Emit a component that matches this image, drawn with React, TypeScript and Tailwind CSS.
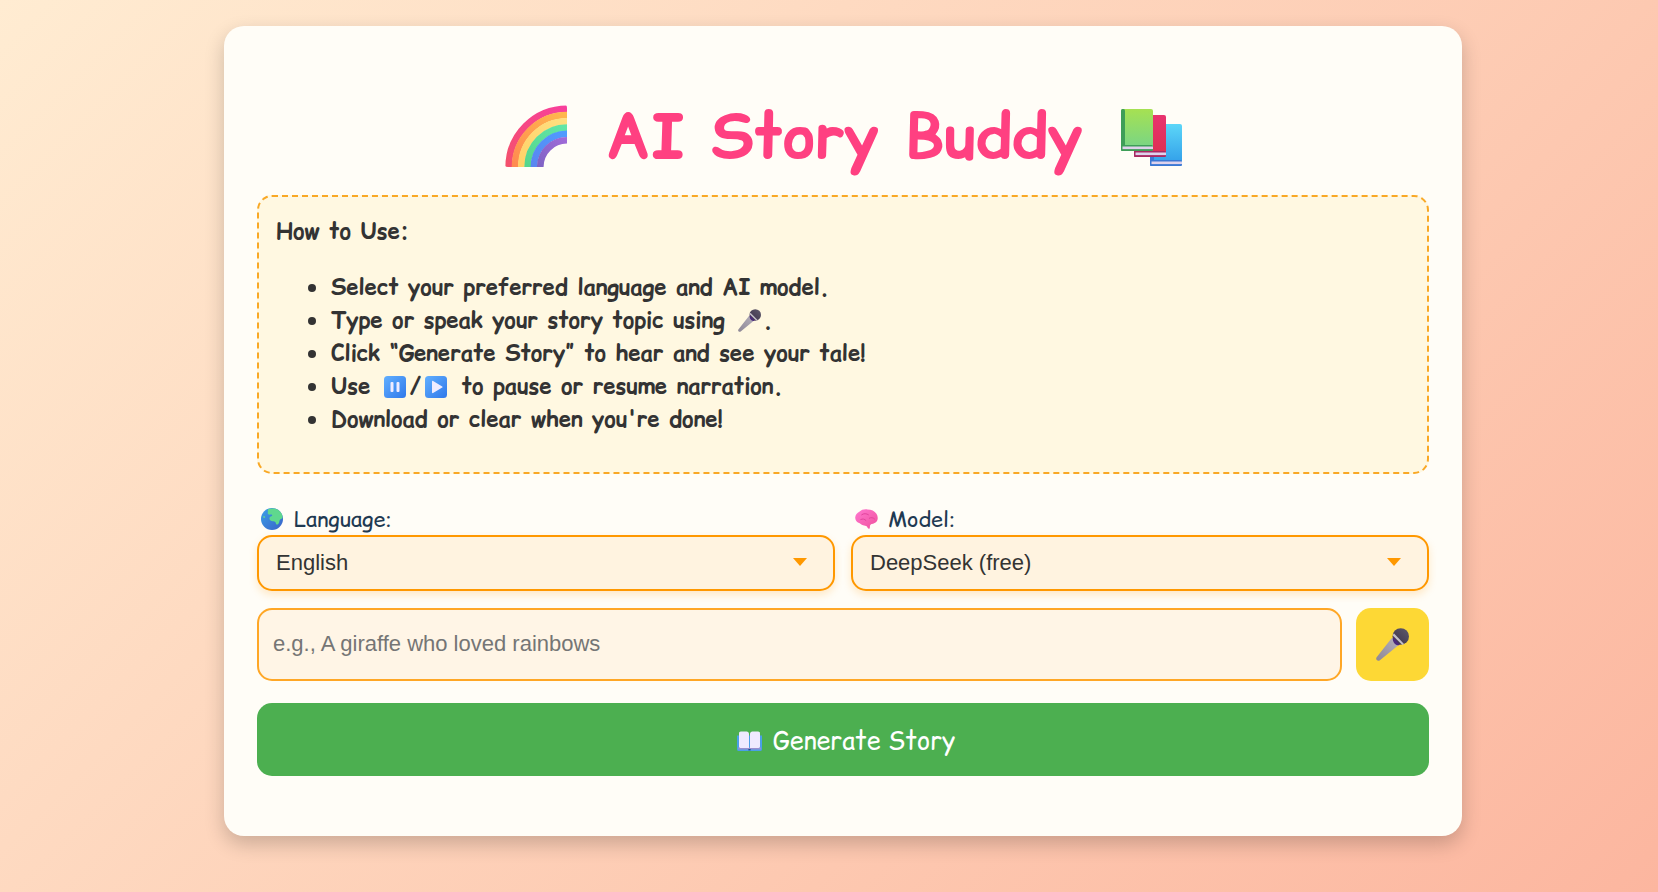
import React from 'react';

const bands = [
  { r: 29.6, a: '#f83f9c', b: '#f4516c' },
  { r: 26.4, a: '#ffb84d', b: '#ff8a50' },
  { r: 23.2, a: '#ffdf80', b: '#ffd268' },
  { r: 20, a: '#62e6a8', b: '#55d68c' },
  { r: 16.8, a: '#4f9bff', b: '#5a86f0' },
  { r: 13.6, a: '#a06ad8', b: '#7f63c4' },
];

const Rainbow = () => (
  <svg viewBox="0 0 32 32" className="w-[63px] h-[63px] shrink-0 -mt-[3px]">
    <defs>
      {bands.map((s, i) => (
        <linearGradient key={i} id={`band${i}`} x1="1" y1="0" x2="0" y2="1">
          <stop offset="0" stopColor={s.a} />
          <stop offset="1" stopColor={s.b} />
        </linearGradient>
      ))}
      <clipPath id="rainbowClip">
        <rect x="0" y="0" width="32" height="32" rx="2" />
      </clipPath>
    </defs>
    <g clipPath="url(#rainbowClip)" fill="none" strokeWidth="3.4">
      {bands.map((s, i) => (
        <path key={i} d={`M${32 - s.r} 32A${s.r} ${s.r} 0 0 1 32 ${32 - s.r}`} stroke={`url(#band${i})`} />
      ))}
    </g>
  </svg>
);

const OneBook: React.FC<{ x: number; y: number; id: string; top: string; bottom: string; spine: string }> = ({ x, y, id, top, bottom, spine }) => (
  <g transform={`translate(${x} ${y})`}>
    <defs>
      <linearGradient id={id} x1="0" y1="0" x2="0" y2="1">
        <stop offset="0" stopColor={top} />
        <stop offset="1" stopColor={bottom} />
      </linearGradient>
    </defs>
    <rect width="32" height="42" rx="2" fill={`url(#${id})`} />
    <rect width="4" height="42" rx="1.5" fill={spine} />
    <rect y="36" width="32" height="6" rx="1.5" fill={spine} />
    <rect x="1.5" y="37.5" width="30.5" height="2.6" fill="#ded2ec" />
  </g>
);

const Books = () => (
  <svg viewBox="0 0 61 57" className="w-[61px] h-[57px] shrink-0">
    <OneBook x={29} y={15} id="bookBlue" top="#5cd6f8" bottom="#2f9be8" spine="#3a78d4" />
    <OneBook x={13} y={6} id="bookRed" top="#e8336f" bottom="#dc3050" spine="#a82a62" />
    <OneBook x={0} y={0} id="bookGreen" top="#a6e152" bottom="#74d48a" spine="#3e9e58" />
  </svg>
);

const Mic: React.FC<{ className: string }> = ({ className }) => (
  <svg viewBox="0 0 32 32" className={className}>
    <defs>
      <linearGradient id="micBody" x1="0" y1="1" x2="1" y2="0">
        <stop offset="0" stopColor="#8d8795" />
        <stop offset="1" stopColor="#b5b0bb" />
      </linearGradient>
      <linearGradient id="micHead" x1="0" y1="1" x2="1" y2="0">
        <stop offset="0" stopColor="#3a3048" />
        <stop offset="1" stopColor="#5f5a6c" />
      </linearGradient>
    </defs>
    <path d="M15.5 9.5L22 16.5L3.8 31.2C2.8 32 1.5 31.9.7 31C0 30.2 0 29 .8 28.1Z" fill="url(#micBody)" />
    <circle cx="24" cy="8.2" r="8" fill="url(#micHead)" />
    <path d="M16.3 9.8C16 11.8 16.8 13.8 18.2 15.2C19.6 16.6 21.6 17 23.4 16.6L16.9 8.9Z" fill="#4b2a7c" />
    <path d="M17.3 5.2L27.2 15.4L25.6 16.4L16.2 7.2Z" fill="#c4c0ca" />
  </svg>
);

const Pause = () => (
  <svg viewBox="0 0 22 22" className="inline-block w-[22px] h-[22px] align-[-4px] ml-[4px]">
    <defs>
      <linearGradient id="pauseFill" x1="0" y1="0" x2="1" y2="1">
        <stop offset="0" stopColor="#62b0ff" />
        <stop offset="1" stopColor="#2f78ea" />
      </linearGradient>
    </defs>
    <rect width="22" height="22" rx="3.5" fill="url(#pauseFill)" />
    <rect x="6.5" y="6" width="3" height="10" rx="1" fill="#f0ecff" />
    <rect x="12.5" y="6" width="3" height="10" rx="1" fill="#f0ecff" />
  </svg>
);

const Play = () => (
  <svg viewBox="0 0 22 22" className="inline-block w-[22px] h-[22px] align-[-4px]">
    <defs>
      <linearGradient id="playFill" x1="0" y1="0" x2="1" y2="1">
        <stop offset="0" stopColor="#62b0ff" />
        <stop offset="1" stopColor="#2f78ea" />
      </linearGradient>
    </defs>
    <rect width="22" height="22" rx="3.5" fill="url(#playFill)" />
    <path d="M7 5.5C7 4.9 7.6 4.6 8.1 4.9L17.2 10.4C17.7 10.7 17.7 11.3 17.2 11.6L8.1 17.1C7.6 17.4 7 17.1 7 16.5Z" fill="#f0ecff" />
  </svg>
);

const Globe = () => (
  <svg viewBox="0 0 22 22" className="w-[22px] h-[22px] shrink-0">
    <defs>
      <linearGradient id="sea" x1="0" y1="0" x2="1" y2="1">
        <stop offset="0" stopColor="#3aa0e8" />
        <stop offset="1" stopColor="#3a62c8" />
      </linearGradient>
    </defs>
    <circle cx="11" cy="11" r="11" fill="url(#sea)" />
    <path d="M7 1.2C10 0 15 .2 18 2.5C20.5 4.6 21.7 7.5 21.6 10C20.6 11 19.6 10.8 18.8 12C18.2 13.5 18.4 15 17 16.2C16 16.8 15 16.6 14.8 15.2C14.6 13.8 13.6 13.4 12.4 13.2C10.4 13.4 8.6 12.6 8.4 10.6C8.4 9 9.8 8.4 11 8C11.6 7 10.8 6.2 9.4 6.6C8 6.8 6.2 6 6.8 4.4C7.2 3.4 6.6 2.2 7 1.2Z" fill="#5fd88e" />
    <path d="M2.6 8C3.6 7.8 4.4 8.6 4 9.6C3.4 10.4 2.4 10 2.2 9C2.2 8.6 2.3 8.2 2.6 8Z" fill="#5fd88e" />
  </svg>
);

const Brain = () => (
  <svg viewBox="0 0 24 22" className="w-[23px] h-[21px] shrink-0">
    <defs>
      <linearGradient id="brainFill" x1="0" y1="0" x2="1" y2="1">
        <stop offset="0" stopColor="#ff78d0" />
        <stop offset="1" stopColor="#f0509c" />
      </linearGradient>
    </defs>
    <path d="M4.5 3C6.5.8 10 0 13 .5C17 .6 20.6 2 22.4 5C24 7.4 24.2 10.4 23 12.6C21.8 14.6 19.4 15.4 17.4 15.8C16.6 16 15.8 16.8 15.6 18C15.6 19.4 15.4 20.8 14.6 20.8C13.6 20.8 13 19.4 12.4 18.4C11.4 17.2 9.8 17.6 8.4 17C6.4 16.4 5.4 15 3.6 14.4C1.4 13.4 0 11.2 .2 8.6C.4 6.2 2.2 4.2 4.5 3Z" fill="url(#brainFill)" />
    <path d="M7 6C9 4.4 12 4.6 14 6M15 9.6C17 8.6 19 9 20.4 10.4M6 11C8 10 10 10.4 11.4 12" fill="none" stroke="#e0429a" strokeWidth="1" strokeLinecap="round" />
  </svg>
);

const OpenBook = () => (
  <svg viewBox="0 0 25 20" className="w-[25px] h-[20px] shrink-0">
    <path d="M0 4.5V18.6C0 19.4.6 20 1.4 20H23.6C24.4 20 25 19.4 25 18.6V4.5Z" fill="#4a9fe8" />
    <rect x="1" y="16.5" width="23" height="2" fill="#9a8fd0" />
    <path d="M2 2.2C2 1.2 2.8.4 3.8.4H9.6C11 .4 12 1.4 12 2.8V17H3.4C2.6 17 2 16.4 2 15.6Z" fill="#efeaff" />
    <path d="M23 2.2C23 1.2 22.2.4 21.2.4H15.4C14 .4 13 1.4 13 2.8V17H21.6C22.4 17 23 16.4 23 15.6Z" fill="#efeaff" />
    <rect x="11.4" y="18" width="2.2" height="1.4" fill="#1e4a8c" />
  </svg>
);

const Caret = () => (
  <span className="absolute right-[28px] top-[23px] w-0 h-0 border-x-[7px] border-x-transparent border-t-[8px] border-t-[#ff9800] pointer-events-none" />
);

const Dropdown: React.FC<{ value: string; options: string[] }> = ({ value, options }) => (
  <div className="relative">
    <select
      defaultValue={value}
      className='block w-full h-[56px] pl-[17px] pr-10 pb-[2px] appearance-none rounded-[15px] border-[2.5px] border-[#ff9800] bg-[#fff3e0] text-[#333] text-[22px] font-["Liberation_Sans",sans-serif] shadow-[0_4px_8px_rgba(255,152,0,0.2)] outline-none'
    >
      {options.map((o) => (
        <option key={o}>{o}</option>
      ))}
    </select>
    <Caret />
  </div>
);

const Step: React.FC<{ children: React.ReactNode }> = ({ children }) => (
  <li className="flex items-center gap-[15px] h-[33px]">
    <span className="w-[8px] h-[8px] rounded-full bg-[#333] shrink-0" />
    <span>{children}</span>
  </li>
);

export default function App() {
  return (
    <div className='min-h-[892px] flex items-start pl-[224px] pt-[26px] bg-[linear-gradient(135deg,#ffecd2,#fcb69f)] font-["Comic_Relief",monospace]'>
      <div className="w-[1238px] h-[810px] px-[33px] pt-[33px] rounded-[20px] bg-[#fffdf7] shadow-[0_8px_20px_rgba(0,0,0,0.2)]">
        <h1 className="h-[136px] pt-[20px] flex items-center justify-center gap-[39px] text-[61.5px] font-bold text-[#ff4081] leading-none whitespace-pre">
          <Rainbow />
          <span>AI Story Buddy</span>
          <Books />
        </h1>

        <div className="h-[279px] pl-[17px] pr-[18px] py-[18px] rounded-[15px] border-2 border-dashed border-[#f9a825] bg-[#fff8e1] text-[#333] text-[22px] font-bold">
          <p className="leading-[33px] mb-[23px]">How to Use:</p>
          <ul className="pl-[32px]">
            <Step>Select your preferred language and AI model.</Step>
            <Step>
              Type or speak your story topic using <Mic className="inline-block w-[23px] h-[23px] align-[-4px] ml-[4px] mr-[2px]" />.
            </Step>
            <Step>Click “Generate Story” to hear and see your tale!</Step>
            <Step>
              Use <Pause /><span className="mx-[4px]">/</span><Play /> <span className="ml-[5px]">to pause or resume narration.</span>
            </Step>
            <Step>Download or clear when you're done!</Step>
          </ul>
        </div>

        <div className="grid grid-cols-2 gap-x-[16px] mt-[31px]">
          <div>
            <label className="flex items-center gap-[11px] pl-[4px] pb-[2px] text-[21.6px] leading-[28px] text-[#1f3a52]">
              <Globe />
              Language:
            </label>
            <Dropdown value="English" options={['English', 'Hindi', 'Spanish']} />
          </div>
          <div>
            <label className="flex items-center gap-[10px] pl-[4px] pb-[2px] text-[21.6px] leading-[28px] text-[#1f3a52]">
              <Brain />
              Model:
            </label>
            <Dropdown value="DeepSeek (free)" options={['DeepSeek (free)', 'Llama (free)']} />
          </div>
        </div>

        <div className="flex gap-[14px] mt-[17px]">
          <input
            placeholder="e.g., A giraffe who loved rainbows"
            className='flex-1 h-[73px] px-[14px] pb-[2px] rounded-[15px] border-[2.5px] border-[#ffa726] bg-[#fff5e6] text-[22px] font-["Liberation_Sans",sans-serif] placeholder:text-[#757575] outline-none'
          />
          <button className="w-[73px] h-[73px] rounded-[15px] bg-[#fdd835] flex items-center justify-center">
            <Mic className="w-[33px] h-[33px]" />
          </button>
        </div>

        <button className="flex items-center justify-center gap-[11px] w-full h-[73px] mt-[22px] pl-[6px] pt-[2px] rounded-[15px] bg-[#4caf50] text-white text-[25px]">
          <OpenBook />
          Generate Story
        </button>
      </div>
    </div>
  );
}
